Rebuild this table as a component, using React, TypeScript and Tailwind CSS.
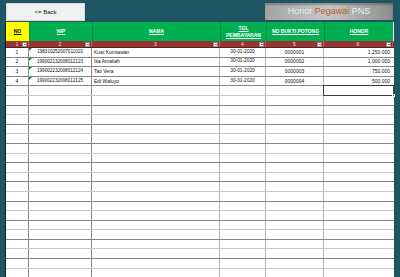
const cols = [23, 63, 128, 46, 58, 69];

const colBorder = [
  "border-r border-r-[#8a8a8a]",
  "border-r border-r-[#8a8a8a]",
  "border-r border-r-[#b4b4b4]",
  "border-r border-r-[#b4b4b4]",
  "border-r border-r-[#b4b4b4]",
  "",
];

const data = [
  ["1", "198310252007011010", "Kuat Kurniawan", "30-01-2020", "0000001", "1.250.000"],
  ["2", "199002232008012123", "Ika Amaliah", "30-01-2020", "0000002", "1.000.000"],
  ["3", "199002232008012124", "Tati Vera", "30-01-2020", "0000003", "750.000"],
  ["4", "199002232008012125", "Edi Waluyo", "30-01-2020", "0000004", "500.000"],
];

const align = ["justify-center", "justify-center", "justify-start pl-[2px]", "justify-center", "justify-center", "justify-end pr-[3px]"];
const size = ["text-[5px]", "text-[4.6px]", "text-[5px]", "text-[4.8px]", "text-[5px]", "text-[5px]"];

function FilterBtn() {
  return (
    <div className="absolute right-[1px] top-[1px] w-[5px] h-[5px] bg-[#f2f2f2] border border-[#8c8c8c] flex items-center justify-center">
      <div className="w-0 h-0 border-l-[1px] border-r-[1px] border-t-[1px] border-l-transparent border-r-transparent border-t-black" />
    </div>
  );
}

/*****************************************************
           Component
*****************************************************/
export default function App() {
  const rows = Array.from({ length: 24 }, (_, i) => data[i] ?? ["", "", "", "", "", ""]);
  return (
    <div
      className="w-[400px] h-[277px] bg-[#1f5663] overflow-hidden flex flex-col"
      style={{ fontFamily: '"Liberation Sans", Arial, sans-serif' }}
    >
      {/* top bar */}
      <div className="h-[22px] flex items-start shrink-0">
        <div className="ml-[6px] mt-[3px] w-[79px] h-[18px] bg-[#f0f0f0] border border-[#d6d6d6] flex items-center justify-center text-[6px] text-[#222]">
          &lt;= Back
        </div>
        <div className="ml-auto mr-[7px] mt-[3px] w-[128px] h-[17px] bg-gradient-to-r from-[#a4a4a4] via-[#c6c6c6] to-[#8d8d8d] shadow-[inset_0_2px_2px_rgba(0,0,0,0.25)] flex items-center justify-center text-[9px] leading-none">
          <span className="text-[#ececec]">Honor&nbsp;</span>
          <span className="text-[#b8662c]">Pegawai</span>
          <span className="text-[#ececec]">&nbsp;PNS</span>
        </div>
      </div>

      {/* sheet */}
      <div className="ml-[5px] w-[389px] border-l border-l-[#0e1a2c] bg-white flex-1 flex flex-col">
        {/* header */}
        <div className="flex h-[19px] shrink-0">
          {["NO", "NIP", "NAMA", "TGL|PEMBAYARAN", "NO BUKTI POTONG", "HONOR"].map((h, i) => (
            <div
              key={h}
              style={{ width: cols[i] }}
              className={`${i === 0 ? "bg-[#ffff00] text-black" : "bg-[#00b050] text-white border-l border-l-[#0d8c45]"} flex flex-col items-center justify-center gap-[2px] text-[5px] font-bold underline leading-none`}
            >
              {h.split("|").map((t) => (
                <span key={t}>{t}</span>
              ))}
            </div>
          ))}
        </div>

        {/* filter row */}
        <div className="flex h-[7px] shrink-0 bg-[#963634] border-b border-b-[#5a1f1e]">
          {cols.map((w, i) => (
            <div
              key={i}
              style={{ width: w }}
              className="relative flex items-center justify-center text-[5px] leading-none text-[#f2dcdb] border-r border-r-[#b35b59]"
            >
              {i + 1}
              <FilterBtn />
            </div>
          ))}
        </div>

        {/* data rows */}
        {rows.map((r, ri) => (
          <div
            key={ri}
            className={`flex h-[9.6px] shrink-0 border-b ${ri < 4 || ri % 2 === 1 ? "border-b-[#858585]" : "border-b-[#c8c8c8]"}`}
          >
            {r.map((c, ci) => (
              <div
                key={ci}
                style={{ width: cols[ci] }}
                className={`relative flex items-center ${align[ci]} ${colBorder[ci]} ${size[ci]} leading-none text-[#111] whitespace-nowrap`}
              >
                {ci === 1 && c && (
                  <div className="absolute left-0 top-0 w-0 h-0 border-t-[3px] border-r-[3px] border-t-[#1a8a2e] border-r-transparent" />
                )}
                {c}
                {ri === 4 && ci === 5 && (
                  <>
                    <div className="absolute inset-[-1px] border-[1.5px] border-[#3a3a3a]" />
                    <div className="absolute right-[-2px] bottom-[-2px] w-[3px] h-[3px] bg-[#5a3a3a] border border-white" />
                  </>
                )}
              </div>
            ))}
          </div>
        ))}
      </div>
    </div>
  );
}
